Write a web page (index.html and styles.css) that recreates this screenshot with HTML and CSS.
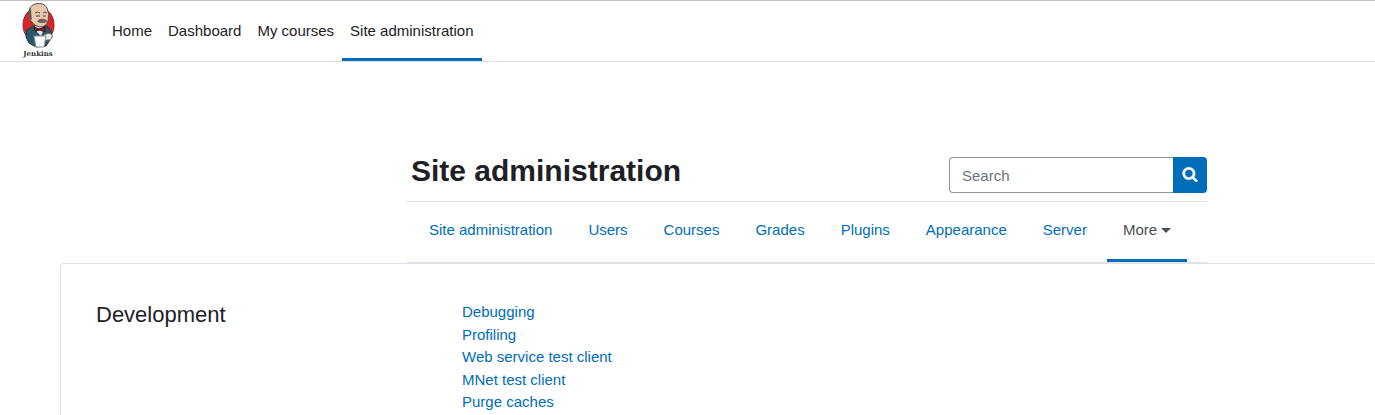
FILE: index.html
```
<!DOCTYPE html>
<html lang="en">
<head>
    <meta charset="utf-8">
    <meta name="viewport" content="width=device-width, initial-scale=1">
    <title>Site administration</title>
    <link rel="stylesheet" href="styles.css">
</head>
<body>
    <nav class="navbar">
        <a class="brand" href="#" aria-label="Jenkins">
            <svg class="logo" width="36" height="56" viewBox="0 0 36 56">
                <ellipse cx="18.500" cy="22" rx="15.500" ry="18" fill="#d8252b" stroke="#8a2a2c" stroke-width="1"/>
                <!-- jacket -->
                <path d="M7 27 L13 23 L27 23 L31 28 L32 34 L26 43 L16 44 L9 40 L6 34 Z" fill="#2b5768" stroke="#1c3540" stroke-width="1"/>
                <path d="M15 23 L25 24 L21 33 L17 29 Z" fill="#dfe5e8"/>
                <!-- head -->
                <path d="M9 12 Q8 3 15 1 Q24 -1 27 5 Q30 11 28 18 Q26 24 20 24 Q14 23 12 19 Q8 16 9 12 Z" fill="#e8c8ac" stroke="#5a4f4a" stroke-width="1"/>
                <path d="M10 16 Q7 9 11 5 Q11 11 12 17 Z" fill="#5b5754"/>
                <path d="M15 10 Q17 8 20 10 M23 10 Q25 8 27 10" stroke="#5a4a40" stroke-width="1" fill="none"/>
                <path d="M16 13 L20 13 M23 13 L26 13" stroke="#4c4440" stroke-width="1" fill="none"/>
                <path d="M17 19 Q19 15 23 16 Q27 16 27 19 Q23 21 17 19 Z" fill="#6b625d"/>
                <!-- bow tie -->
                <path d="M14 24 L19 26 L25 24 L25 29 L20 27 L15 28 Z" fill="#a3161e" stroke="#2a1516" stroke-width="1"/>
                <!-- mug and hand -->
                <path d="M24 32 Q30 29 32 32 Q33 37 28 37 L24 37 Z" fill="#f1ece8" stroke="#777" stroke-width="1"/>
                <path d="M14 33 L26 33 L24 44 L16 44 Z" fill="#fbfbfb" stroke="#8b9499" stroke-width="1"/>
                <text class="logo-text" x="18" y="53" text-anchor="middle">Jenkins</text>
            </svg>
        </a>
        <ul class="primary-nav">
            <li><a href="#">Home</a></li>
            <li><a href="#">Dashboard</a></li>
            <li><a href="#">My courses</a></li>
            <li><a class="active" href="#">Site administration</a></li>
        </ul>
    </nav>

    <header class="page-header">
        <div class="title-row">
            <h1>Site administration</h1>
            <form class="search">
                <input type="text" placeholder="Search" aria-label="Search">
                <button type="submit" aria-label="Search">
                    <svg width="16" height="16" viewBox="0 0 1792 1792" fill="currentColor">
                        <path d="M1216 832q0-185-131.500-316.500T768 384 451.500 515.500 320 832t131.500 316.500T768 1280t316.500-131.500T1216 832zm512 832q0 52-38 90t-90 38q-54 0-90-38l-343-342q-179 124-399 124-143 0-273.500-55.500t-225-150-150-225T64 832t55.500-273.500 150-225 225-150T768 128t273.500 55.500 225 150 150 225T1472 832q0 220-124 399l343 343q37 37 37 90z"/>
                    </svg>
                </button>
            </form>
        </div>
        <ul class="tabs">
            <li><a href="#">Site administration</a></li>
            <li><a href="#">Users</a></li>
            <li><a href="#">Courses</a></li>
            <li><a href="#">Grades</a></li>
            <li><a href="#">Plugins</a></li>
            <li><a href="#">Appearance</a></li>
            <li><a href="#">Server</a></li>
            <li><a class="active" href="#">More <span class="caret"></span></a></li>
        </ul>
    </header>

    <main class="card">
        <h4>Development</h4>
        <ul class="links">
            <li><a href="#">Debugging</a></li>
            <li><a href="#">Profiling</a></li>
            <li><a href="#">Web service test client</a></li>
            <li><a href="#">MNet test client</a></li>
            <li><a href="#">Purge caches</a></li>
        </ul>
    </main>
</body>
</html>
```

FILE: styles.css
```
* {
    box-sizing: border-box;
}
body {
    display: flex;
    flex-direction: column;
    min-height: 100vh;
    margin: 0;
    font-family: "Liberation Sans", Arial, sans-serif;
    font-size: 15px;
    line-height: 1.5;
    color: #1d2125;
    background-color: #fff;
}
ul {
    list-style: none;
    margin: 0;
    padding: 0;
}
a {
    color: #006dba;
    text-decoration: none;
}
.navbar {
    display: flex;
    height: 62px;
    padding-left: 20px;
    border-top: 1px solid #c0c0c0;
    border-bottom: 1px solid #dee2e6;
}
.brand {
    display: flex;
    align-items: center;
    width: 84px;
}
.logo-text {
    font-family: "DejaVu Serif", serif;
    font-size: 7px;
    font-weight: bold;
    fill: #333;
}
.primary-nav {
    display: flex;
}
.primary-nav a {
    display: flex;
    align-items: center;
    height: 100%;
    padding: 3px 8px 0;
    border-bottom: 3px solid transparent;
    color: #1d2125;
}
.primary-nav a.active {
    border-bottom-color: #006dba;
}
.page-header {
    max-width: 800px;
    margin: 88px 0 0 407px;
}
.title-row {
    display: flex;
    justify-content: space-between;
    align-items: flex-end;
    height: 52px;
    padding: 0 0 8px 4px;
    border-bottom: 1px solid #dee2e6;
}
h1 {
    margin: 0 0 4px;
    font-size: 30px;
    line-height: 36px;
}
.search {
    display: flex;
    width: 258px;
    height: 36px;
}
.search input {
    flex: 1;
    min-width: 0;
    padding: 3px 12px 0;
    border: 1px solid #8f959e;
    border-right: 0;
    border-radius: 4px 0 0 4px;
    font: inherit;
    color: #495057;
}
.search input::placeholder {
    color: #6a737b;
}
.search button {
    display: flex;
    align-items: center;
    justify-content: center;
    width: 34px;
    padding: 0 0 2px;
    border: 0;
    border-radius: 0 4px 4px 0;
    background: #006dba;
    color: #fff;
    cursor: pointer;
}
.search svg {
    stroke: #fff;
    stroke-width: 50;
}
.tabs {
    display: flex;
    gap: 4px;
    height: 61px;
    padding-left: 6px;
    border-bottom: 1px solid #dee2e6;
}
.tabs a {
    display: flex;
    align-items: center;
    height: 100%;
    padding: 0 16px;
    border-bottom: 3px solid transparent;
}
.tabs a.active {
    color: #495057;
    border-bottom-color: #006dba;
}
.caret {
    margin-left: 4px;
    border-top: 5px solid;
    border-left: 5px solid transparent;
    border-right: 5px solid transparent;
}
.card {
    display: grid;
    flex: 1;
    grid-template-columns: 366px 1fr;
    margin-left: 60px;
    padding: 37px 0 0 35px;
    border: 1px solid #dee2e6;
    border-right: 0;
    border-bottom: 0;
    border-top-left-radius: 4px;
}
h4 {
    margin: 0;
    font-size: 22px;
    font-weight: normal;
    line-height: 27px;
}
```
